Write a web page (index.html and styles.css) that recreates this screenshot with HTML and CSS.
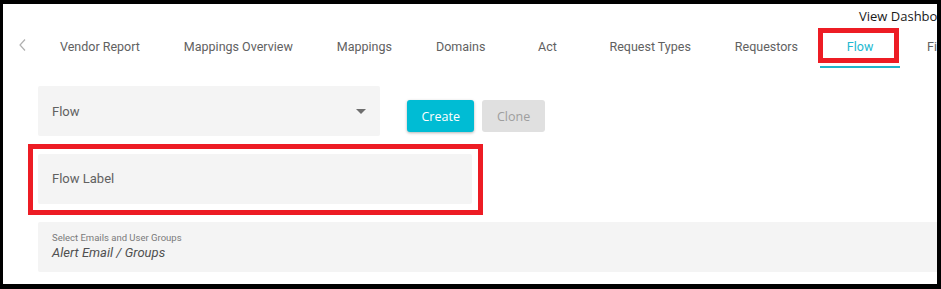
FILE: index.html
```html
<!DOCTYPE html>
<html lang="en">
<head>
<meta charset="utf-8">
<title>Flow</title>
<link rel="stylesheet" href="styles.css">
</head>
<body>
<div class="frame">
  <div class="page">
    <div class="topbar">View Dashboard</div>
    <nav class="tabs">
      <button class="tab-scroll" aria-label="Scroll left">
        <svg width="7" height="12" viewBox="0 0 7 12"><polyline points="6,0.5 1,6 6,11.5" fill="none" stroke="#b0b0b0" stroke-width="1.2"/></svg>
      </button>
      <div class="tab">Vendor Report</div>
      <div class="tab">Mappings Overview</div>
      <div class="tab">Mappings</div>
      <div class="tab">Domains</div>
      <div class="tab">Act</div>
      <div class="tab">Request Types</div>
      <div class="tab">Requestors</div>
      <div class="tab active">Flow<span class="mark mark-tab"></span></div>
      <div class="tab">Files</div>
    </nav>
    <div class="form">
      <div class="row">
        <div class="select">
          <span>Flow</span>
          <span class="caret"></span>
        </div>
        <div class="actions">
          <button class="btn btn-primary">Create</button>
          <button class="btn btn-disabled">Clone</button>
        </div>
      </div>
      <div class="input-wrap">
        <div class="field short">Flow Label</div>
        <span class="mark mark-field"></span>
      </div>
      <div class="field wide">
        <div class="small-label">Select Emails and User Groups</div>
        <div class="value">Alert Email / Groups</div>
      </div>
    </div>
  </div>
</div>
</body>
</html>
```

FILE: styles.css
```css
html, body {
  margin: 0;
  padding: 0;
  background: #000;
}

.frame {
  margin: 4px 4px 5px 3px;
  width: 934px;
  height: 280px;
  background: #fff;
  overflow: hidden;
}

.page {
  width: 1100px;
  font-family: Roboto, "Open Sans", sans-serif;
}

.topbar {
  box-sizing: border-box;
  height: 18px;
  padding-top: 3px;
  padding-left: 856px;
  line-height: 18px;
  font-family: "Open Sans", sans-serif;
  font-size: 13px;
  color: #1a1a1a;
  white-space: nowrap;
}

.tabs {
  display: flex;
  height: 46px;
}

.tab-scroll {
  width: 35px;
  height: 46px;
  padding: 17px 0 0 16px;
  margin: 0;
  border: 0;
  background: transparent;
  display: flex;
  align-items: flex-start;
  box-sizing: border-box;
}

.tab {
  position: relative;
  box-sizing: border-box;
  height: 46px;
  min-width: 80px;
  padding: 17px 22px 0;
  line-height: 15px;
  font-size: 12.5px;
  color: #616161;
  text-align: center;
  white-space: nowrap;
  border-bottom: 2px solid transparent;
}

.tab.active {
  color: #22b8d0;
  border-bottom-color: #1fb5cb;
}

.mark {
  position: absolute;
  border: 5px solid #ed1c24;
  box-sizing: border-box;
  pointer-events: none;
}

.mark-tab {
  left: -2px;
  top: 6px;
  width: 81px;
  height: 35px;
}

.form {
  padding: 18px 0 0 35px;
  display: flex;
  flex-direction: column;
  gap: 18px;
}

.row {
  display: flex;
  align-items: flex-start;
  gap: 27px;
}

.select {
  box-sizing: border-box;
  width: 342px;
  height: 50px;
  padding: 0 14px;
  background: #f4f4f4;
  border-radius: 2px;
  display: flex;
  align-items: center;
  justify-content: space-between;
  font-size: 13px;
  color: #616161;
}

.caret {
  width: 0;
  height: 0;
  border-left: 5px solid transparent;
  border-right: 5px solid transparent;
  border-top: 5px solid #6e6e6e;
}

.actions {
  display: flex;
  gap: 8px;
  margin-top: 14px;
}

.btn {
  height: 32px;
  padding: 0 14.5px;
  border: 0;
  border-radius: 3px;
  font-family: "Open Sans", sans-serif;
  font-size: 12.5px;
}

.btn-primary {
  background: #00bcd4;
  color: #fff;
  box-shadow: 0 1px 3px rgba(0, 0, 0, 0.3);
}

.btn-disabled {
  background: #e0e0e0;
  color: #9e9e9e;
}

.input-wrap {
  position: relative;
  width: 434px;
}

.mark-field {
  left: -10px;
  top: -10px;
  right: -11px;
  bottom: -11px;
}

.field {
  box-sizing: border-box;
  background: #f4f4f4;
  border-radius: 2px;
  padding: 0 14px;
  font-size: 13px;
  color: #616161;
}

.field.short {
  height: 50px;
  line-height: 50px;
}

.field.wide {
  width: 1000px;
  height: 50px;
  padding-top: 10px;
}

.small-label {
  font-size: 9.5px;
  line-height: 11px;
  color: #7a7a7a;
}

.value {
  margin-top: 2px;
  font-size: 13px;
  line-height: 16px;
  font-style: italic;
  color: #505050;
}
```
